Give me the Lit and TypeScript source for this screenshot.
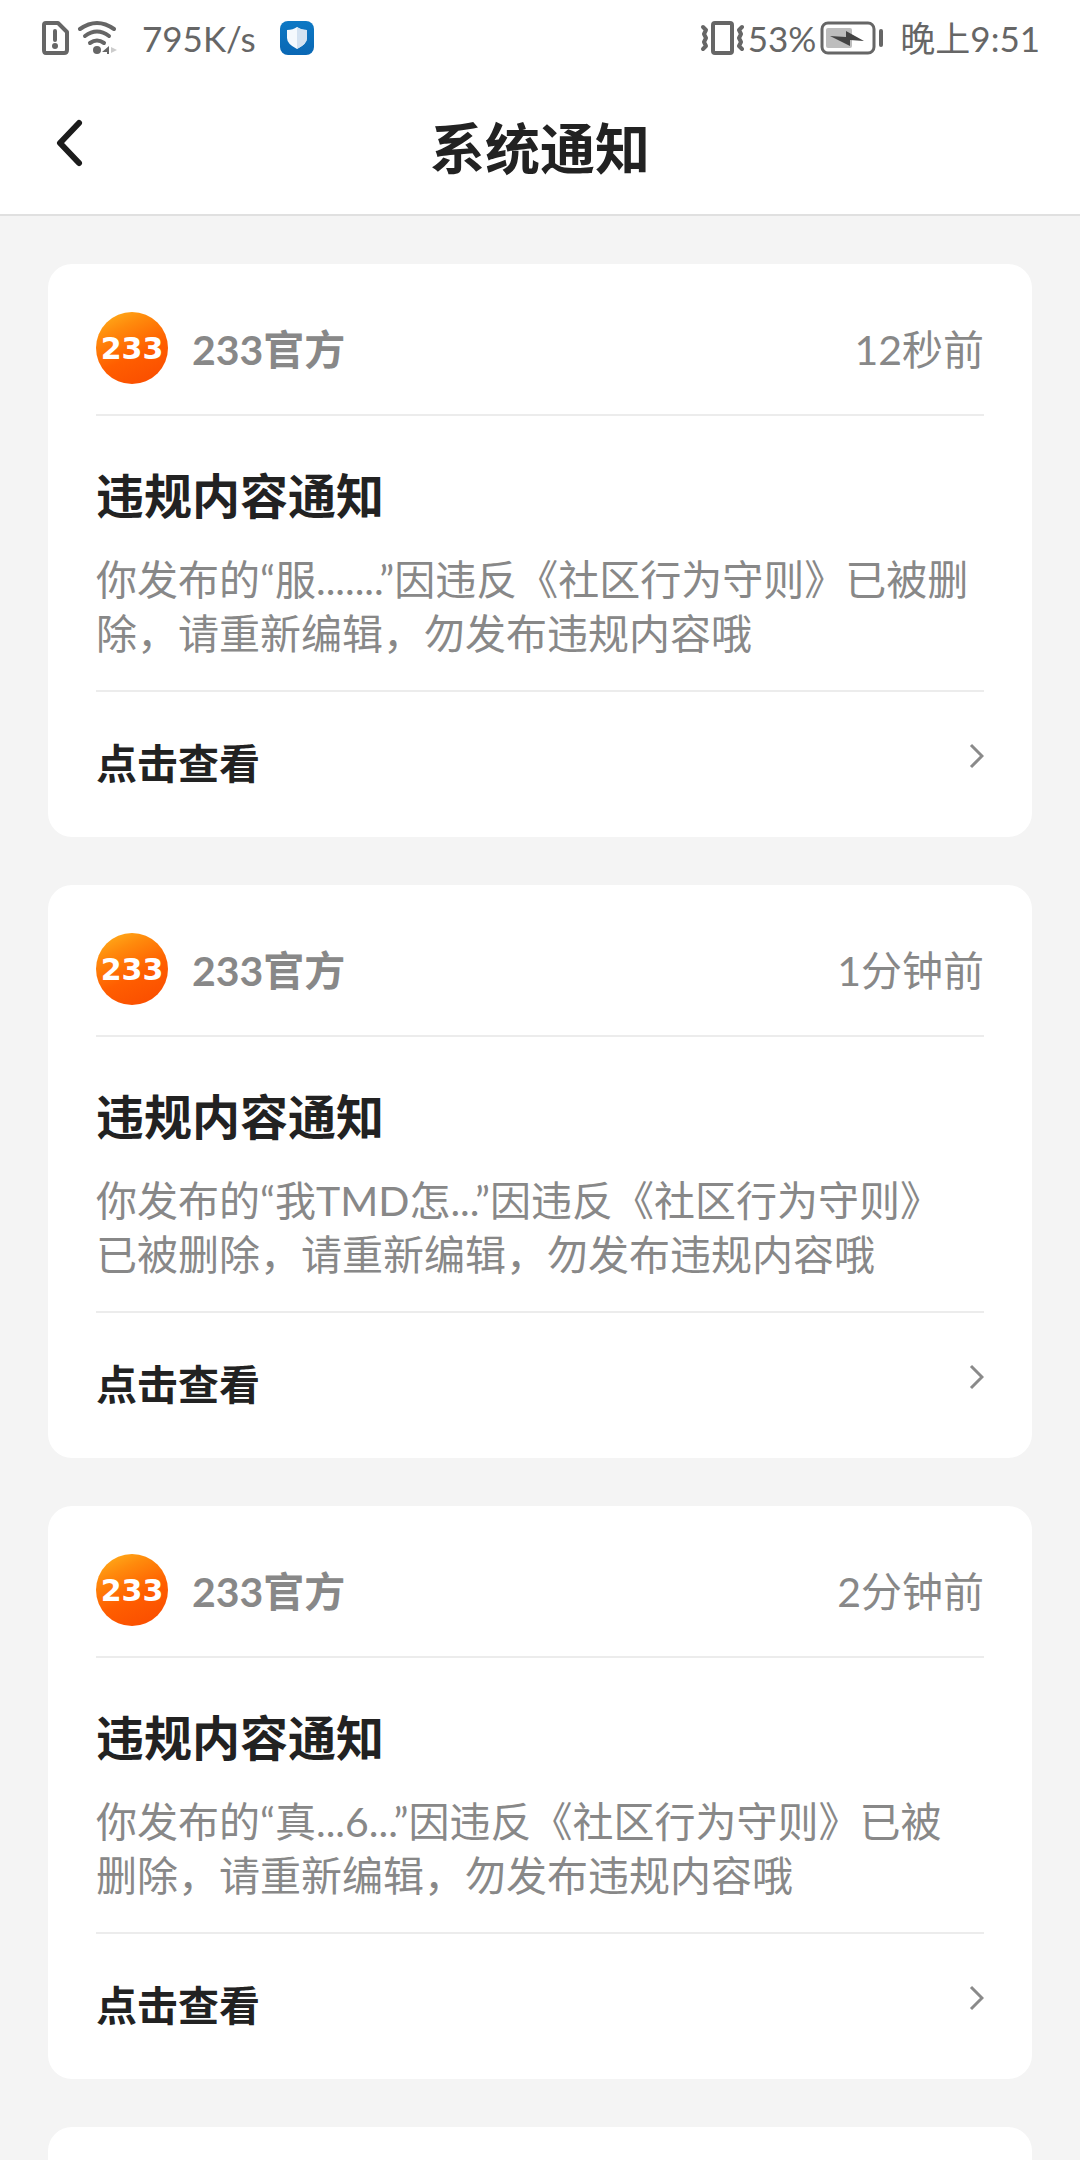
import { LitElement, html, css } from "lit";
import { customElement, property } from "lit/decorators.js";

interface Notice {
  time: string;
  post: string;
}

const NOTICES: Notice[] = [
  { time: "12秒前", post: "服......." },
  { time: "1分钟前", post: "我TMD怎..." },
  { time: "2分钟前", post: "真...6..." },
];

@customElement("status-bar")
class StatusBar extends LitElement {
  static styles = css`
    :host {
      display: flex;
      justify-content: space-between;
      align-items: center;
      height: 76px;
      padding: 0 40px;
      color: #666;
      font-size: 35px;
      line-height: 48px;
      white-space: nowrap;
    }
    .group {
      display: flex;
      align-items: center;
    }
    .left {
      gap: 24px;
    }
    .right {
      gap: 16px;
    }
    .signals,
    .power {
      display: flex;
      align-items: center;
      gap: 4px;
    }
    svg {
      display: block;
      flex: none;
    }
  `;

  render() {
    return html`
      <div class="group left">
        <div class="signals">
          <svg width="30" height="36" viewBox="0 0 30 36" aria-hidden="true">
            <path d="M6 3H18L27 12V30Q27 33 24 33H6Q4 33 4 30V5Q4 3 6 3Z" fill="none" stroke="#666" stroke-width="4" stroke-linejoin="round" />
            <path d="M15 11V20" stroke="#666" stroke-width="4" stroke-linecap="round" />
            <circle cx="15" cy="26" r="3" fill="#666" />
          </svg>
          <svg width="44" height="36" viewBox="0 0 44 36" aria-hidden="true">
            <g fill="none" stroke="#666" stroke-width="4" stroke-linecap="round">
              <path d="M6 9Q23 -3 40 9" />
              <path d="M11 16Q23 7 35 16" />
              <path d="M16 23Q23 18 30 23" />
            </g>
            <circle cx="23" cy="30" r="4" fill="#666" />
            <path d="M35 26V34H33V32H28Z" fill="#666" />
            <path d="M37 27L43 30L37 33Z" fill="#ccc" />
          </svg>
        </div>
        <span>795K/s</span>
        <svg width="34" height="34" viewBox="0 0 34 34" aria-hidden="true">
          <defs>
            <linearGradient id="app" x1="0" y1="0" x2="0" y2="1">
              <stop offset="0" stop-color="#0d78c4" />
              <stop offset="1" stop-color="#0a67b4" />
            </linearGradient>
          </defs>
          <rect width="34" height="34" rx="8" fill="url(#app)" />
          <path d="M17 6Q21 9 27 9V17Q27 23 17 28Q7 23 7 17V9Q13 9 17 6Z" fill="#f4f9fd" />
          <path d="M17 6Q21 9 27 9V17Q27 23 17 28Z" fill="#d3e2f1" />
        </svg>
      </div>
      <div class="group right">
        <div class="power">
          <svg width="44" height="36" viewBox="0 0 44 36" aria-hidden="true">
            <rect x="13" y="3" width="19" height="30" rx="2" fill="none" stroke="#666" stroke-width="4" />
            <g fill="none" stroke="#666" stroke-width="4" stroke-linejoin="round" stroke-linecap="round">
              <path d="M3 7L6 10L4 14L6 18L4 22L6 26L3 29" />
              <path d="M42 7L39 10L41 14L39 18L41 22L39 26L42 29" />
            </g>
          </svg>
          <span>53%</span>
          <svg width="64" height="36" viewBox="0 0 64 36" aria-hidden="true">
            <rect x="2" y="3" width="52" height="30" rx="6" fill="none" stroke="#666" stroke-width="3" />
            <rect x="6" y="8" width="26" height="20" rx="2" fill="#bdbdbd" />
            <path d="M10 16L26 17V11L44 21L30 20V26Z" fill="#444" />
            <rect x="59" y="9" width="4" height="18" rx="2" fill="#666" />
          </svg>
        </div>
        <span>晚上9:51</span>
      </div>
    `;
  }
}

@customElement("notice-card")
class NoticeCard extends LitElement {
  @property() time = "";
  @property() post = "";

  static styles = css`
    :host {
      display: block;
      padding: 0 48px;
      border-radius: 24px;
      background: #fff;
      color: #888;
      font-size: 41px;
    }
    .head {
      display: flex;
      align-items: flex-end;
      gap: 24px;
      padding: 48px 0 30px;
      border-bottom: 2px solid #ececec;
      line-height: 68px;
    }
    .logo {
      display: flex;
      align-items: center;
      justify-content: center;
      width: 72px;
      height: 72px;
      border-radius: 50%;
      background: linear-gradient(155deg, #ffb01c 4%, #ff8a0c 26%, #ff5e00 58%, #f94a00 100%);
      color: #fff;
      font: bold 30px "DejaVu Sans", sans-serif;
    }
    .name {
      flex: 1;
      font-weight: bold;
    }
    .title {
      margin: 0;
      padding: 50px 0 27px;
      color: #222;
      font-size: 48px;
      line-height: 60px;
    }
    .text {
      margin: 0;
      padding: 0 12px 29px 0;
      line-height: 54px;
    }
    .more {
      display: flex;
      align-items: flex-start;
      justify-content: space-between;
      padding: 40px 0 41px;
      border-top: 2px solid #ececec;
      color: #222;
      font-weight: bold;
      line-height: 64px;
      text-decoration: none;
    }
    .chevron {
      display: block;
      width: 16px;
      height: 48px;
    }
  `;

  render() {
    return html`
      <header class="head">
        <span class="logo">233</span>
        <span class="name">233官方</span>
        <time>${this.time}</time>
      </header>
      <h2 class="title">违规内容通知</h2>
      <p class="text">${`你发布的“${this.post}”因违反《社区行为守则》已被删除，请重新编辑，勿发布违规内容哦`}</p>
      <a class="more" href="#">
        <span>点击查看</span>
        <svg class="chevron" viewBox="0 0 16 48" aria-hidden="true">
          <path d="M3 13L14 24L3 35" fill="none" stroke="#8a8a8a" stroke-width="3" />
        </svg>
      </a>
    `;
  }
}

@customElement("app-root")
class AppRoot extends LitElement {
  static styles = css`
    :host {
      display: flex;
      flex-direction: column;
      min-height: 100vh;
      background: #f4f4f4;
      font-family: Lato, "Noto Sans CJK SC", sans-serif;
    }
    .top {
      border-bottom: 2px solid #e0e0e0;
      background: #fff;
    }
    .nav {
      display: grid;
      grid-template-columns: 74px 1fr 74px;
      align-items: start;
      padding: 30px 32px 24px;
    }
    .back {
      display: flex;
      align-items: center;
      justify-content: center;
      height: 74px;
      padding: 0;
      border: 0;
      background: none;
    }
    .heading {
      margin: 0;
      color: #222;
      font-size: 55px;
      line-height: 84px;
      text-align: center;
    }
    .list {
      display: flex;
      flex: 1;
      flex-direction: column;
      gap: 48px;
      padding: 48px 48px 0;
    }
    .next {
      flex: 1;
      border-radius: 24px 24px 0 0;
      background: #fff;
    }
  `;

  render() {
    return html`
      <div class="top">
        <status-bar></status-bar>
        <nav class="nav">
          <button class="back" type="button" aria-label="返回">
            <svg width="32" height="52" viewBox="0 0 32 52" aria-hidden="true">
              <path d="M26 6L7 26L26 46" fill="none" stroke="#1c1c1c" stroke-width="6" stroke-linecap="round" stroke-linejoin="round" />
            </svg>
          </button>
          <h1 class="heading">系统通知</h1>
        </nav>
      </div>
      <main class="list">
        ${NOTICES.map((n) => html`<notice-card .time=${n.time} .post=${n.post}></notice-card>`)}
        <div class="next"></div>
      </main>
    `;
  }
}
